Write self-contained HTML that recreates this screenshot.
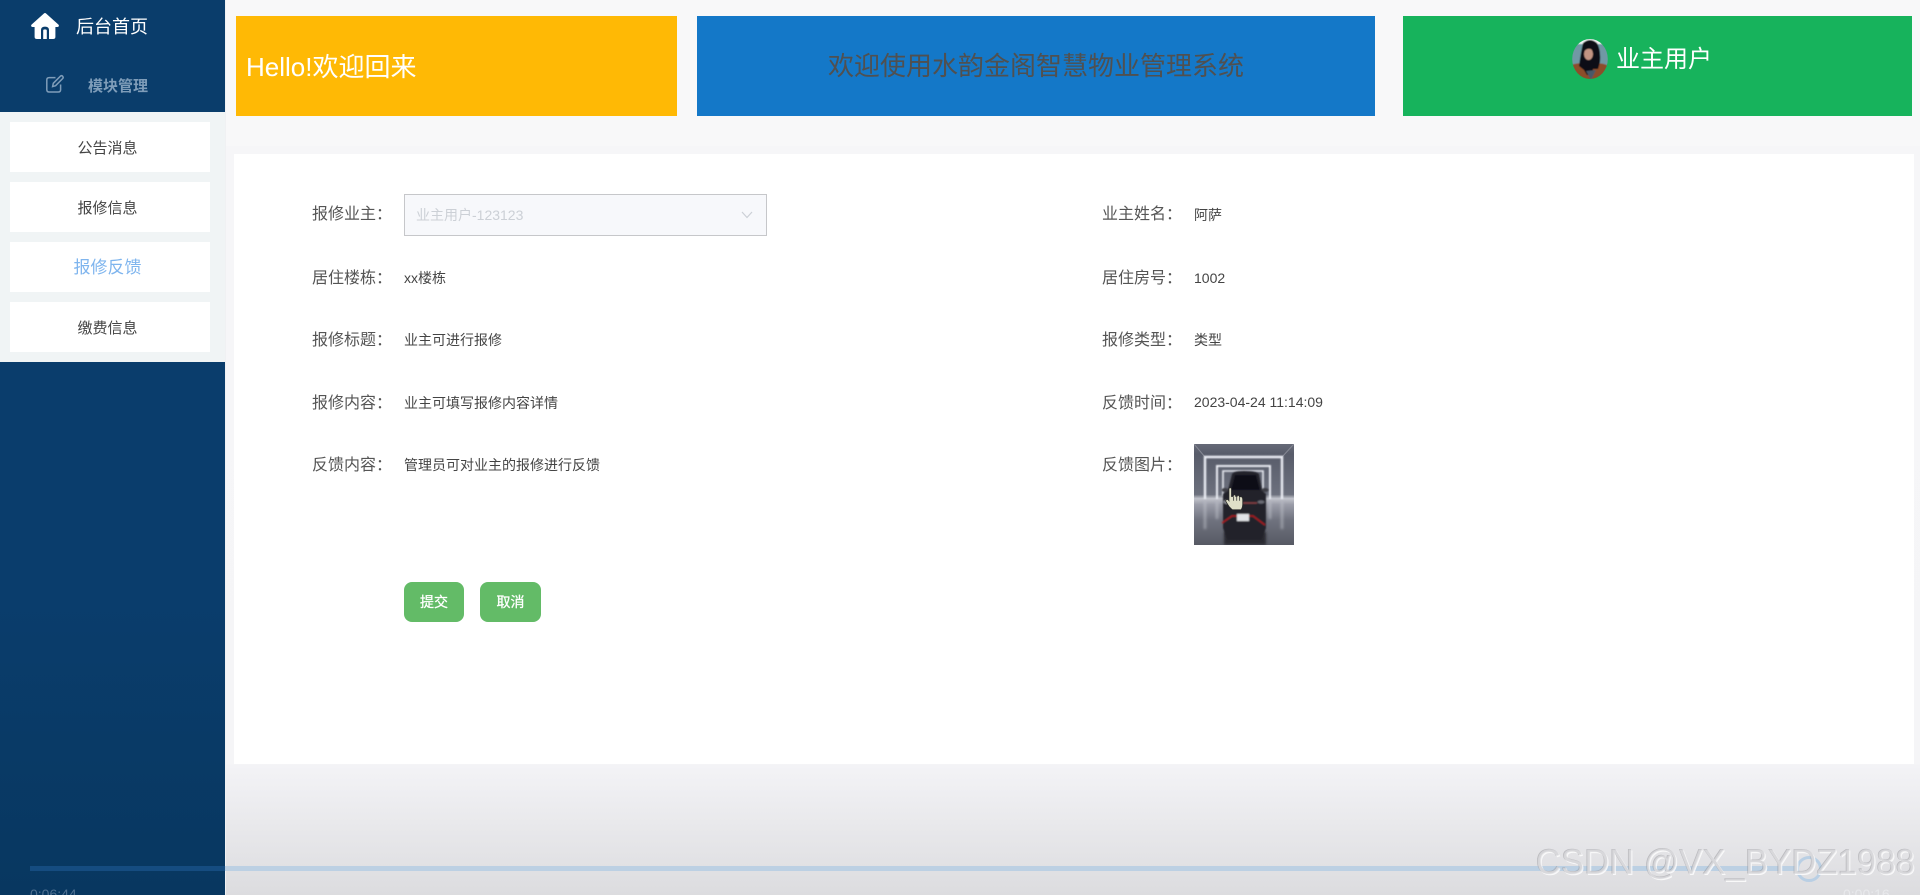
<!DOCTYPE html>
<html lang="zh">
<head>
<meta charset="utf-8">
<title>报修反馈</title>
<style>
html,body{margin:0;padding:0;width:1920px;height:895px;overflow:hidden}
body{position:relative;background:#f8f8f9;font-family:"Liberation Sans","Noto Sans CJK SC",sans-serif;color:#444}
.a{position:absolute}
.t{position:absolute;white-space:nowrap;line-height:20px;height:20px}
.lab{font-size:16px;color:#555;left:312px}
.val{font-size:14px;color:#444;left:404px}
.rl{left:1102px}
.rv{left:1194px}
.item{position:absolute;left:10px;width:200px;height:50px;background:#fff}
.mt{position:absolute;left:10px;width:195px;text-align:center;font-size:15px;color:#444;line-height:20px;height:20px;white-space:nowrap}
.btn{position:absolute;top:582px;height:40px;border-radius:8px;background:#63bb67;color:#fff;font-size:14px;line-height:40px;text-align:center;-webkit-text-stroke:.3px #fff}
</style>
</head>
<body>
<!-- main background -->
<div class="a" style="left:225px;top:146px;width:1695px;height:749px;background:linear-gradient(#f6f6f8 0,#f5f5f7 618px,#f3f3f6 620px,#dcdcdf 749px)"></div>
<!-- banners -->
<div class="a" style="left:236px;top:16px;width:441px;height:100px;background:#ffb905"></div>
<div class="t" style="left:246px;top:52px;height:30px;line-height:30px;font-size:26px;color:#fff">Hello!欢迎回来</div>
<div class="a" style="left:697px;top:16px;width:678px;height:100px;background:#1478c8"></div>
<div class="t" style="left:697px;width:678px;text-align:center;top:51px;height:30px;line-height:30px;font-size:26px;color:#505050">欢迎使用水韵金阁智慧物业管理系统</div>
<div class="a" style="left:1403px;top:16px;width:509px;height:100px;background:#17b35c"></div>
<svg class="a" style="left:1571px;top:38px" width="38" height="42" viewBox="0 0 38 42">
  <defs>
    <clipPath id="av"><ellipse cx="19" cy="21" rx="17.8" ry="20"/></clipPath>
    <filter id="b0"><feGaussianBlur stdDeviation=".45"/></filter>
  </defs>
  <g clip-path="url(#av)">
    <g filter="url(#b0)">
    <rect width="38" height="42" fill="#6f98a4"/>
    <rect width="38" height="6" fill="#f0f4f5"/>
    <path d="M0 27Q8 24 14 26L24 26Q30 24 38 28V42H0Z" fill="#8c4e2c"/>
    <path d="M12 5Q19 -1 26 5Q30 12 29 24L27 31H22L21 37H16L13 32L8 28Q10 14 12 5Z" fill="#0e0c12"/>
    <ellipse cx="17.5" cy="16" rx="4.5" ry="6" fill="#c39483"/>
    <path d="M12.5 14Q17 8 23 13L23 6H12Z" fill="#0e0c12"/>
    <path d="M15 33L20 42L25 32Z" fill="#4a5868"/>
    </g>
  </g>
</svg>
<div class="t" style="left:1616px;top:45px;height:30px;line-height:30px;font-size:24px;color:#fff">业主用户</div>

<!-- card -->
<div class="a" style="left:234px;top:154px;width:1680px;height:610px;background:#fff"></div>

<!-- sidebar -->
<div class="a" style="left:0;top:0;width:225px;height:895px;background:linear-gradient(#0a3d6b,#0a3d6c 600px,#083760)"></div>
<div class="a" style="left:225px;top:0;width:1px;height:895px;background:#f0f1f3"></div>
<svg class="a" style="left:30px;top:12px" width="30" height="28" viewBox="0 0 30 28">
  <path fill="#fff" fill-rule="evenodd" d="M14.2 1.3Q15 .7 15.8 1.3L28.6 12.8Q29.6 14.6 27.6 15H25.4V24.7Q25.4 27 23 27H7Q4.6 27 4.6 24.7V15H2.4Q.4 14.6 1.4 12.8ZM11 27H13.2V18.6Q13.2 17.4 15 17.4Q16.8 17.4 16.8 18.6V27H19V18Q19 14.6 15 14.6Q11 14.6 11 18Z"/>
</svg>
<div class="t" style="left:76px;top:17px;font-size:18px;color:#fff">后台首页</div>
<svg class="a" style="left:45px;top:74px" width="20" height="20" viewBox="0 0 20 20" fill="none" stroke="#7f9db9" stroke-width="1.5">
  <path d="M10.5 3.6H4.2Q1.8 3.6 1.8 6V15.6Q1.8 18 4.2 18H13.2Q15.6 18 15.6 15.6V10.5"/>
  <path d="M7.6 12.6L8.3 9.3L15.4 2.2Q16.5 1.2 17.6 2.2Q18.7 3.4 17.7 4.5L10.6 11.7Z"/>
</svg>
<div class="t" style="left:88px;top:77px;font-size:15px;font-weight:700;color:#7f9db9">模块管理</div>

<div class="a" style="left:0;top:112px;width:225px;height:250px;background:#f0f4f5"></div>
<div class="item" style="top:122px"></div>
<div class="item" style="top:182px"></div>
<div class="item" style="top:242px"></div>
<div class="item" style="top:302px"></div>
<div class="mt" style="top:139px">公告消息</div>
<div class="mt" style="top:199px">报修信息</div>
<div class="mt" style="top:258px;font-size:17px;color:#7fb5ee">报修反馈</div>
<div class="mt" style="top:319px">缴费信息</div>

<!-- form left -->
<div class="t lab" style="top:205px">报修业主：</div>
<div class="a" style="left:404px;top:194px;width:361px;height:40px;border:1px solid #c6c7ca;background:#f7f8fb"></div>
<div class="t" style="left:416px;top:205px;font-size:14px;color:#ccd0d6">业主用户-123123</div>
<svg class="a" style="left:741px;top:211px" width="12" height="8" viewBox="0 0 12 8" fill="none" stroke="#ccd0d6" stroke-width="1.2"><path d="M1 1L6 6.5L11 1"/></svg>

<div class="t lab" style="top:269px">居住楼栋：</div>
<div class="t val" style="top:268px">xx楼栋</div>
<div class="t lab" style="top:331px">报修标题：</div>
<div class="t val" style="top:330px">业主可进行报修</div>
<div class="t lab" style="top:394px">报修内容：</div>
<div class="t val" style="top:393px">业主可填写报修内容详情</div>
<div class="t lab" style="top:456px">反馈内容：</div>
<div class="t val" style="top:455px">管理员可对业主的报修进行反馈</div>

<!-- form right -->
<div class="t lab rl" style="top:205px">业主姓名：</div>
<div class="t val rv" style="top:205px">阿萨</div>
<div class="t lab rl" style="top:269px">居住房号：</div>
<div class="t val rv" style="top:268px">1002</div>
<div class="t lab rl" style="top:331px">报修类型：</div>
<div class="t val rv" style="top:330px">类型</div>
<div class="t lab rl" style="top:394px">反馈时间：</div>
<div class="t val rv" style="top:392px">2023-04-24 11:14:09</div>
<div class="t lab rl" style="top:456px">反馈图片：</div>

<svg class="a" style="left:1194px;top:444px" width="100" height="101" viewBox="0 0 100 101">
  <defs>
    <linearGradient id="bg" x1="0" y1="0" x2="0" y2="1">
      <stop offset="0" stop-color="#666a78"/><stop offset=".1" stop-color="#585c6a"/><stop offset=".5" stop-color="#6c707d"/><stop offset=".54" stop-color="#c2c4cc"/><stop offset=".6" stop-color="#9a9ca8"/><stop offset=".75" stop-color="#70737f"/><stop offset="1" stop-color="#575a64"/>
    </linearGradient>
    <filter id="b1"><feGaussianBlur stdDeviation=".8"/></filter>
    <filter id="b2"><feGaussianBlur stdDeviation="1.4"/></filter>
  </defs>
  <rect width="100" height="101" fill="url(#bg)"/>
  <path d="M0 0L11 13M100 0L88 13" stroke="#858894" stroke-width="1"/>
  <g fill="none" stroke="#eceef5" filter="url(#b1)">
    <path d="M11 55V13H88V55" stroke-width="2.4"/>
    <path d="M23 55V22H76V55" stroke-width="2"/>
    <path d="M29 52V27H69V52" stroke-width="1.6"/>
  </g>
  <g fill="none" stroke="#c8cad2" opacity=".55" filter="url(#b2)">
    <path d="M11 58V85M88 58V85M23 58V75M76 58V75" stroke-width="2.4"/>
  </g>
  <path d="M30 88H72V101H30Z" fill="#2a2a30" filter="url(#b2)"/>
  <g filter="url(#b1)">
    <path d="M34 46L38 30Q40 27 50 27Q62 27 65 30L68 46L72 50V84L68 96H33L29 84V50Z" fill="#24242c"/>
    <path d="M37 46L41 31H62L66 46Z" fill="#0e0e14"/>
    <ellipse cx="31" cy="46" rx="3.5" ry="2" fill="#3c3c44"/>
    <ellipse cx="71" cy="46" rx="3.5" ry="2" fill="#3c3c44"/>
    <ellipse cx="33" cy="58" rx="3.5" ry="2" fill="#8a8c94"/>
    <ellipse cx="67" cy="58" rx="3.5" ry="1.6" fill="#6a6c74"/>
    <path d="M49 59H63" stroke="#a85050" stroke-width=".9"/>
    <path d="M28 79L38 72H59L71 81" fill="none" stroke="#b81818" stroke-width="1.2"/>
    <rect x="43" y="70" width="12" height="7" fill="#e2e4e8"/>
  </g>
</svg>
<svg class="a" style="left:1225px;top:487px" width="19" height="24" viewBox="0 0 22 28">
  <path d="M4.5 2.2Q4.5 .8 6 .8Q7.5 .8 7.5 2.2V11H9.5Q9.5 9 11 9Q12.5 9 12.5 11H14Q14 9.8 15.3 9.8Q16.7 9.8 16.7 11.5H17.6Q18.8 10.8 19.8 12Q20.6 13 20.6 15V20Q20.6 24 18.6 26.6H8.6Q4.6 23.6 2.6 19.6L1 17Q.4 15 2.2 14.6Q3.6 14.4 4.5 16Z" fill="#dfdfc8" stroke="#2a2a2a" stroke-width=".9"/>
  <path d="M10 11.5V16M13.6 11.5V16M17 12V16" stroke="#333" stroke-width=".9"/>
</svg>

<div class="btn" style="left:404px;width:60px">提交</div>
<div class="btn" style="left:480px;width:61px">取消</div>

<!-- video overlay -->
<div class="a" style="left:30px;top:866px;width:195px;height:5px;background:#154c80"></div>
<div class="a" style="left:225px;top:866px;width:1571px;height:5px;background:#bcd0e3"></div>
<div class="a" style="left:1796px;top:856px;width:20px;height:20px;border:3px solid #b9cfe4;border-radius:50%"></div>
<div class="t" style="left:30px;top:884px;font-size:14px;color:#4d6f90">0:06:44</div>
<div class="t" style="left:1843px;top:884px;font-size:14px;color:#e8e9ec">0:00:16</div>
<div class="t" style="left:1536px;top:843px;height:40px;line-height:40px;font-size:34.75px;color:rgba(226,226,230,.6);text-shadow:-.7px -.7px 0 rgba(140,140,145,.45),.8px .8px 0 rgba(255,255,255,.8)">CSDN @VX_BYDZ1988</div>
</body>
</html>
